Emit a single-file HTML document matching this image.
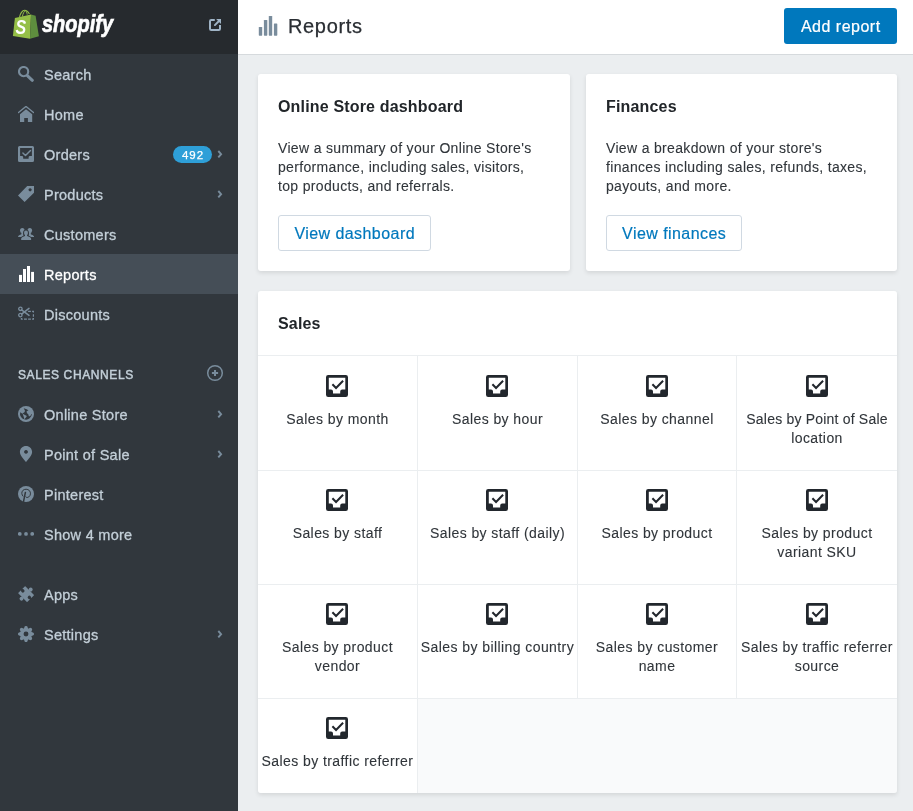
<!DOCTYPE html>
<html>
<head>
<meta charset="utf-8">
<title>Reports</title>
<style>
*{box-sizing:border-box;margin:0;padding:0}
html,body{width:913px;height:811px;overflow:hidden}
body{font-family:"Liberation Sans",sans-serif;background:#ebeef0;color:#31373d;position:relative;will-change:transform}
#side{position:absolute;left:0;top:0;width:238px;height:811px;background:#31373d}
#sidehead{position:absolute;left:0;top:0;width:238px;height:54px;background:#262a2e}
#wordmark{position:absolute;left:42px;top:9.4px;font-size:24.4px;line-height:30px;font-weight:bold;font-style:italic;color:#fff;transform-origin:0 50%;transform:scaleX(.82);white-space:nowrap;-webkit-text-stroke:.7px #fff}
.nav{position:absolute;left:0;width:238px;height:40px}
.nav.active{background:#454e57}
.nav svg.ic{position:absolute;left:18px;top:12px;width:16px;height:16px;fill:#798c9c}
.nav.active svg.ic{fill:#fff}
.nav .t{position:absolute;left:44px;top:1px;line-height:41px;font-size:14.5px;color:#c3cfd8;white-space:nowrap;letter-spacing:.27px;-webkit-text-stroke:.3px #c3cfd8}
.nav.active .t{color:#fff;-webkit-text-stroke-color:#fff}
.nav .chev{position:absolute;left:216px;top:15px;width:7px;height:10px}
.badge{position:absolute;left:173px;top:12px;width:39px;height:17px;border-radius:9px;background:#2e9fd8;color:#fff;font-size:11.5px;line-height:18px;text-align:center;letter-spacing:1px;padding-left:1px;-webkit-text-stroke:.25px #fff}
#sc{position:absolute;left:18px;top:368px;font-size:12px;letter-spacing:.6px;color:#c3cfd8;line-height:14px;-webkit-text-stroke:.45px #c3cfd8}
#main{position:absolute;left:238px;top:0;width:675px;height:811px}
#top{position:absolute;left:0;top:0;width:675px;height:55px;background:#fff;border-bottom:1px solid #d6dadd}
#title{position:absolute;left:50px;top:0;line-height:53px;font-size:20px;color:#2a2e33;letter-spacing:.65px;-webkit-text-stroke:.25px #2a2e33}
#addbtn{position:absolute;left:546px;top:8px;width:113px;height:36px;border-radius:3px;background:#0078bd;color:#fff;font-size:16px;line-height:38px;text-align:center;letter-spacing:.5px;padding-left:.5px;-webkit-text-stroke:.2px #fff}
.card{position:absolute;background:#fff;border-radius:3px;box-shadow:0 2px 4px rgba(0,0,0,.1)}
.card h2{position:absolute;left:20px;font-size:16px;font-weight:bold;color:#212529;white-space:nowrap;letter-spacing:.17px}
.card p{position:absolute;left:20px;top:65px;font-size:14px;line-height:19px;color:#30353a;white-space:nowrap;letter-spacing:.33px;-webkit-text-stroke:.1px #30353a}
.btn{position:absolute;left:20px;top:141px;height:36px;border:1px solid #d0d9e2;border-radius:3px;background:#fff;color:#0078bd;font-size:16px;line-height:36px;text-align:center;letter-spacing:.44px;padding-left:.4px;-webkit-text-stroke:.2px #0078bd}
.cell{position:absolute;width:160px;height:114px;background:#fff;text-align:center}
.cell svg{position:absolute;width:22px;height:22px}
.cell .l{position:absolute;left:0;font-size:14px;line-height:19px;color:#30353a;letter-spacing:.42px;-webkit-text-stroke:.1px #30353a}
</style>
</head>
<body>
<div id="side">
  <div id="sidehead">
    <svg id="bag" viewBox="0 0 28 32" style="position:absolute;left:12px;top:8px;width:28px;height:32px">
      <path d="M7.5 9.2 C8 5.5 10.5 2.2 12.6 2.2 C14.6 2.2 16.2 3.8 17.4 6.1" fill="none" stroke="#95bf47" stroke-width="1.1"/>
      <path d="M10.4 8.6 C10.8 5.6 12.3 3 13.6 2.6 M13.2 2.4 C14.3 3.2 15 5 15.2 6.6" fill="none" stroke="#95bf47" stroke-width="1"/>
      <polygon points="2.9,10.1 19,6.5 18,30.8 0.9,27.9" fill="#95bf47"/>
      <polygon points="19,6.5 23.6,7.8 26.9,28.2 18,30.8" fill="#5e8e3e"/>
      <text x="0" y="0" transform="translate(3.6 26.4) scale(0.8 1)" style="font:italic bold 20px 'Liberation Sans',sans-serif" fill="#fff">S</text>
    </svg>
    <div id="wordmark">shopify</div>
    <svg viewBox="0 0 12 12" style="position:absolute;left:209px;top:19px;width:12px;height:12px" fill="none" stroke="#a0b4c6" stroke-width="2">
      <path d="M5.8 1H2.2Q1 1 1 2.2V9.8Q1 11 2.2 11H9.8Q11 11 11 9.8V6"/>
      <path d="M5.9 6.1L9.5 2.5" stroke-linecap="round" stroke-width="1.9"/>
      <polygon points="7.2,0 12,0 12,4.9" fill="#a0b4c6" stroke="none"/>
    </svg>
  </div>

  <div class="nav" style="top:54px"><svg class="ic" viewBox="0 0 16 16"><circle cx="5.6" cy="5.6" r="4.6" fill="none" stroke="#798c9c" stroke-width="2.1"/><path d="M9.6 9.9L14.3 14.3" stroke="#798c9c" stroke-width="3" stroke-linecap="round"/></svg><span class="t">Search</span></div>

  <div class="nav" style="top:94px"><svg class="ic" viewBox="0 0 16 16"><path d="M0.5 6.6L8 0.4L15.5 6.6" fill="none" stroke="#798c9c" stroke-width="1.3" stroke-linecap="round" stroke-linejoin="round"/><path d="M2 8.3L8 3.3L14.2 8.3V16H9.9V12.1H6.2V16H2Z"/></svg><span class="t">Home</span></div>

  <div class="nav" style="top:134px"><svg class="ic" viewBox="0 0 16 16"><path fill-rule="evenodd" d="M1.5 0H14.5Q16 0 16 1.5V14.5Q16 16 14.5 16H1.5Q0 16 0 14.5V1.5Q0 0 1.5 0ZM2.1 2.1V10H3.8Q5.2 10 5.2 11.4V12.8H10.6V11.4Q10.6 10 12 10H13.9V2.1Z"/><path d="M4.9 6.9L7.5 9.6L12.5 4.4" fill="none" stroke="#798c9c" stroke-width="1.4" stroke-linecap="round" stroke-linejoin="round"/></svg><span class="t">Orders</span><span class="badge">492</span><svg class="chev" viewBox="0 0 7 10"><path d="M2.3 2L5.1 5.15L2.3 8.3" fill="none" stroke="#798c9c" stroke-width="1.9"/></svg></div>

  <div class="nav" style="top:174px"><svg class="ic" viewBox="0 0 16 16"><path fill-rule="evenodd" d="M9.2 0H16V6.8L6.6 16L0 9.5ZM12.1 2.2a1.6 1.6 0 1 0 0.01 0Z"/></svg><span class="t">Products</span><svg class="chev" viewBox="0 0 7 10"><path d="M2.3 2L5.1 5.15L2.3 8.3" fill="none" stroke="#798c9c" stroke-width="1.9"/></svg></div>

  <div class="nav" style="top:214px"><svg class="ic" viewBox="0 0 16 16">
    <ellipse cx="4.3" cy="4.6" rx="2.3" ry="2.6"/><path d="M0 11C0 9.6 2 8.8 3.4 8.2V6.5H5.6V11Z"/>
    <ellipse cx="11.8" cy="4.6" rx="2.3" ry="2.6"/><path d="M16.2 11C16.2 9.6 14.2 8.8 12.8 8.2V6.5H10.6V11Z"/>
    <g stroke="#31373d" stroke-width="1.9"><ellipse cx="8" cy="6.9" rx="2" ry="2.3"/><path d="M3.2 14V12.6C3.2 11.2 5.6 10.6 7 10V8.6H9.1V10C10.5 10.6 13.1 11.2 13.1 12.6V14Z"/></g>
    <ellipse cx="8" cy="6.9" rx="2" ry="2.3"/><path d="M3.2 14.1V12.6C3.2 11.2 5.6 10.6 7 10V8.6H9.1V10C10.5 10.6 13.1 11.2 13.1 12.6V14.1Z"/>
  </svg><span class="t">Customers</span></div>

  <div class="nav active" style="top:254px"><svg class="ic" viewBox="0 0 16 16"><rect x="1" y="8.9" width="3" height="7.1"/><rect x="5" y="3" width="3" height="13"/><rect x="9" y="0" width="3" height="16"/><rect x="13.1" y="5.9" width="3" height="10.1"/></svg><span class="t">Reports</span></div>

  <div class="nav" style="top:294px"><svg class="ic" viewBox="0 0 16 16" fill="none" stroke="#798c9c">
    <circle cx="2.4" cy="2.8" r="1.7" stroke-width="1.3" fill="none"/><circle cx="2.4" cy="9.1" r="1.7" stroke-width="1.3" fill="none"/>
    <path d="M3.6 3.9L11 9.4M3.6 8.1L11 2.4" stroke-width="1.5" stroke-linecap="round" fill="none"/>
    <path fill="none" d="M10.1 5.4H12.9M14.1 5.4H15.4V6.6M15.4 8.2V10.8M15.4 12V13.2H14.1M12.9 13.2H10.1M8.9 13.2H6M4.8 13.2H3.4V12" stroke-width="1.2"/>
  </svg><span class="t">Discounts</span></div>

  <div id="sc">SALES CHANNELS</div>
  <svg viewBox="0 0 18 18" style="position:absolute;left:206px;top:364px;width:18px;height:18px" fill="none" stroke="#798c9c"><circle cx="9" cy="9" r="7.3" stroke-width="1.5"/><path d="M5.9 9H12.1M9 5.9V12.1" stroke-width="2"/></svg>

  <div class="nav" style="top:394px"><svg class="ic" viewBox="0 0 16 16"><circle cx="8" cy="8" r="8"/><path fill="#31373d" d="M2.2 6.2L4.4 7.7L5.3 7.1L6.7 5.9L6.9 4.4L5.7 2.3L8 3.1L10.5 4.3L8.6 5.2L8.9 6.9L10.4 8.4L10.8 10.3L11.7 10.3L12.7 9.4L13.4 7.9L13.9 8.1A5.95 5.95 0 1 1 2.2 6.2Z"/><path d="M4.6 7.8L8.9 9.9L8.1 11.2L6.4 13.2L5.6 10.6Z"/></svg><span class="t">Online Store</span><svg class="chev" viewBox="0 0 7 10"><path d="M2.3 2L5.1 5.15L2.3 8.3" fill="none" stroke="#798c9c" stroke-width="1.9"/></svg></div>

  <div class="nav" style="top:434px"><svg class="ic" viewBox="0 0 16 16"><path fill-rule="evenodd" d="M8 0C11.4 0 14.1 2.6 14.1 6C14.1 9.6 10.6 12.6 8 16.1C5.4 12.6 1.9 9.6 1.9 6C1.9 2.6 4.6 0 8 0ZM8 4a1.9 1.9 0 1 0 0.01 0Z"/></svg><span class="t">Point of Sale</span><svg class="chev" viewBox="0 0 7 10"><path d="M2.3 2L5.1 5.15L2.3 8.3" fill="none" stroke="#798c9c" stroke-width="1.9"/></svg></div>

  <div class="nav" style="top:474px"><svg class="ic" viewBox="0 0 16 16"><circle cx="8" cy="8" r="8"/><path d="M5.2 10.4C3.6 8.8 3.2 6.2 4.9 4.4C6.6 2.8 9.6 2.8 11.4 4.6C13 6.4 12.8 9.4 10.8 10.9C9.6 11.8 8.2 11.6 7.6 10.6" fill="none" stroke="#31373d" stroke-width="1"/><path d="M7.4 6.4L5.5 15.6" stroke="#31373d" stroke-width="1.5" stroke-linecap="round" fill="none"/></svg><span class="t">Pinterest</span></div>

  <div class="nav" style="top:514px"><svg class="ic" viewBox="0 0 16 16"><circle cx="1.8" cy="7.9" r="1.9"/><circle cx="8" cy="7.9" r="1.9"/><circle cx="14.2" cy="7.9" r="1.9"/></svg><span class="t">Show 4 more</span></div>

  <div class="nav" style="top:574px"><svg class="ic" viewBox="0 0 16 16" style="overflow:visible"><g transform="translate(8.1 8.1) rotate(45)"><rect x="-6.4" y="-5.05" width="12.8" height="10.1" rx=".6"/><circle cx="0" cy="-6.5" r="1.95"/><circle cx="0" cy="6.5" r="1.95"/><g fill="#31373d"><circle cx="-4.6" cy="0" r="1.7"/><circle cx="4.6" cy="0" r="1.7"/><rect x="-6.8" y="-1" width="2" height="2"/><rect x="4.8" y="-1" width="2" height="2"/></g></g></svg><span class="t">Apps</span></div>

  <div class="nav" style="top:614px"><svg class="ic" viewBox="0 0 16 16"><g transform="translate(8 8)"><circle r="5.5"/><path id="tooth" d="M-2.4 -4.6L-1.35 -7.4Q0 -8.7 1.35 -7.4L2.4 -4.6Z"/><use href="#tooth" transform="rotate(45)"/><use href="#tooth" transform="rotate(90)"/><use href="#tooth" transform="rotate(135)"/><use href="#tooth" transform="rotate(180)"/><use href="#tooth" transform="rotate(225)"/><use href="#tooth" transform="rotate(270)"/><use href="#tooth" transform="rotate(315)"/><circle r="2.45" fill="#31373d"/></g></svg><span class="t">Settings</span><svg class="chev" viewBox="0 0 7 10"><path d="M2.3 2L5.1 5.15L2.3 8.3" fill="none" stroke="#798c9c" stroke-width="1.9"/></svg></div>
</div>
<div id="main">
  <div id="top">
    <svg viewBox="0 0 20 20" style="position:absolute;left:20px;top:16px;width:20px;height:20px" fill="#798c9c"><rect x=".8" y="11" width="3.4" height="8.7" rx=".6"/><rect x="5.9" y="4" width="3.4" height="15.7" rx=".6"/><rect x="10.8" y="0" width="3.4" height="19.7" rx=".6"/><rect x="15.9" y="7.5" width="3.4" height="12.2" rx=".6"/></svg>
    <div id="title">Reports</div>
    <div id="addbtn">Add report</div>
  </div>
  <div class="card" style="left:20px;top:74px;width:312px;height:197px">
    <h2 style="top:24px">Online Store dashboard</h2>
    <p>View a summary of your Online Store's<br>performance, including sales, visitors,<br>top products, and referrals.</p>
    <div class="btn" style="width:153px">View dashboard</div>
  </div>
  <div class="card" style="left:348px;top:74px;width:311px;height:197px">
    <h2 style="top:24px">Finances</h2>
    <p>View a breakdown of your store's<br>finances including sales, refunds, taxes,<br>payouts, and more.</p>
    <div class="btn" style="width:136px">View finances</div>
  </div>
  <div class="card" id="sales" style="left:20px;top:291px;width:639px;height:502px;background:#ebeef0;overflow:hidden">
    <svg width="0" height="0" style="position:absolute"><symbol id="ord" viewBox="0 0 22 22"><path fill="#22272d" fill-rule="evenodd" d="M2.2 0H19.8Q22 0 22 2.2V19.8Q22 22 19.8 22H2.2Q0 22 0 19.8V2.2Q0 0 2.2 0ZM2.8 2.8V14.5H5Q7 14.5 7 16.5V18.4H14.2V16.5Q14.2 14.5 16.2 14.5H19.3V2.8Z"/><path d="M6.4 9.2L10.05 13L17.1 5.8" fill="none" stroke="#22272d" stroke-width="2"/></symbol></svg>
    <div style="position:absolute;left:0;top:0;width:639px;height:64px;background:#fff"></div>
    <h2 style="top:24px">Sales</h2>
    <div style="position:absolute;left:160px;top:408px;width:479px;height:94px;background:#f9fafb"></div>
    <div class="cell" style="left:0px;top:65px;width:159px;height:114px"><svg style="left:68px;top:19px"><use href="#ord"/></svg><div class="l" style="top:54px;width:159px">Sales by month</div></div>
    <div class="cell" style="left:160px;top:65px;width:159px;height:114px"><svg style="left:68px;top:19px"><use href="#ord"/></svg><div class="l" style="top:54px;width:159px">Sales by hour</div></div>
    <div class="cell" style="left:320px;top:65px;width:158px;height:114px"><svg style="left:68px;top:19px"><use href="#ord"/></svg><div class="l" style="top:54px;width:158px">Sales by channel</div></div>
    <div class="cell" style="left:479px;top:65px;width:160px;height:114px"><svg style="left:69px;top:19px"><use href="#ord"/></svg><div class="l" style="top:54px;width:160px"><span style="letter-spacing:.2px">Sales by Point of Sale</span><br>location</div></div>
    <div class="cell" style="left:0px;top:180px;width:159px;height:113px"><svg style="left:68px;top:18px"><use href="#ord"/></svg><div class="l" style="top:53px;width:159px">Sales by staff</div></div>
    <div class="cell" style="left:160px;top:180px;width:159px;height:113px"><svg style="left:68px;top:18px"><use href="#ord"/></svg><div class="l" style="top:53px;width:159px">Sales by staff (daily)</div></div>
    <div class="cell" style="left:320px;top:180px;width:158px;height:113px"><svg style="left:68px;top:18px"><use href="#ord"/></svg><div class="l" style="top:53px;width:158px">Sales by product</div></div>
    <div class="cell" style="left:479px;top:180px;width:160px;height:113px"><svg style="left:69px;top:18px"><use href="#ord"/></svg><div class="l" style="top:53px;width:160px">Sales by product<br>variant SKU</div></div>
    <div class="cell" style="left:0px;top:294px;width:159px;height:113px"><svg style="left:68px;top:18px"><use href="#ord"/></svg><div class="l" style="top:53px;width:159px">Sales by product<br>vendor</div></div>
    <div class="cell" style="left:160px;top:294px;width:159px;height:113px"><svg style="left:68px;top:18px"><use href="#ord"/></svg><div class="l" style="top:53px;width:159px">Sales by billing country</div></div>
    <div class="cell" style="left:320px;top:294px;width:158px;height:113px"><svg style="left:68px;top:18px"><use href="#ord"/></svg><div class="l" style="top:53px;width:158px">Sales by customer<br>name</div></div>
    <div class="cell" style="left:479px;top:294px;width:160px;height:113px"><svg style="left:69px;top:18px"><use href="#ord"/></svg><div class="l" style="top:53px;width:160px">Sales by traffic referrer<br>source</div></div>
    <div class="cell" style="left:0px;top:408px;width:159px;height:94px"><svg style="left:68px;top:18px"><use href="#ord"/></svg><div class="l" style="top:53px;width:159px">Sales by traffic referrer</div></div>
  </div>
</div>
</body>
</html>
